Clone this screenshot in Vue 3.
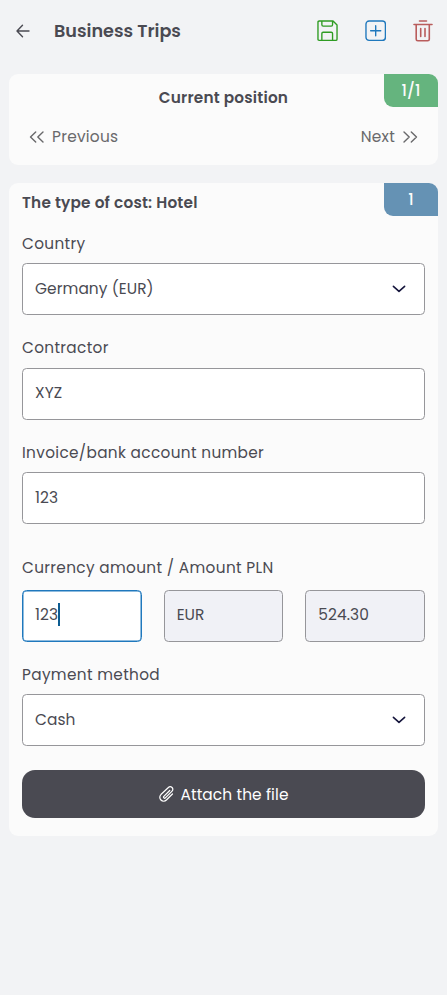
<script setup>
import { ref } from 'vue'

const country = ref('Germany (EUR)')
const contractor = ref('XYZ')
const invoice = ref('123')
const amount = ref('123')
const currency = ref('EUR')
const amountPln = ref('524.30')
const payment = ref('Cash')
</script>

<template>
  <main class="page">
    <header class="header">
      <svg class="back" viewBox="0 0 14 14"><path d="M13 7H1.2M6.5 1.2L1 7l5.5 5.8" /></svg>
      <h1 class="title">Business Trips</h1>
      <div class="actions">
        <svg class="save" viewBox="0 0 22 22"><path d="M1 2.2Q1 1 2.2 1H16.5L20.6 5.2V19.8Q20.6 21 19.4 21H2.2Q1 21 1 19.8ZM5 1V5Q5 6.3 6.3 6.3H14.7Q16 6.3 16 5V1M5 21V14Q5 12.6 6.3 12.6H14.7Q16 12.6 16 14V21" /></svg>
        <svg class="add" viewBox="0 0 22 22"><rect x="1" y="1" width="20" height="20" rx="3.2" /><path d="M11 5.8V16.2M5.8 11H16.2" /></svg>
        <svg class="trash" viewBox="0 0 20 22"><path d="M1 4.5H19M6.5 1H13.5M3.2 4.5V19.2Q3.2 20.8 4.8 20.8H14.7Q16.3 20.8 16.3 19.2V4.5M7.7 8.5V16.5M12 8.5V16.5" /></svg>
      </div>
    </header>

    <section class="card position">
      <span class="badge green">1/1</span>
      <h2 class="position-title">Current position</h2>
      <nav class="pager">
        <a class="page-link">
          <svg class="double" viewBox="0 0 16 14"><path d="M6.7 1.9L1.5 7l5.2 5.1M14 1.9L8.8 7l5.2 5.1" /></svg>
          <span>Previous</span>
        </a>
        <a class="page-link">
          <span>Next</span>
          <svg class="double" viewBox="0 0 16 14"><path d="M2 1.9L7.2 7L2 12.1M9.3 1.9L14.5 7l-5.2 5.1" /></svg>
        </a>
      </nav>
    </section>

    <section class="card cost">
      <span class="badge blue">1</span>
      <h2 class="cost-title">The type of cost: Hotel</h2>

      <div class="field">
        <div class="label">Country</div>
        <div class="control select">
          <span>{{ country }}</span>
          <svg class="chevron" viewBox="0 0 14 8"><path d="M1.4 1.3L7 6.3l5.6-5" /></svg>
        </div>
      </div>
      <div class="field">
        <div class="label">Contractor</div>
        <div class="control"><span>{{ contractor }}</span></div>
      </div>
      <div class="field">
        <div class="label">Invoice/bank account number</div>
        <div class="control"><span>{{ invoice }}</span></div>
      </div>
      <div class="field amounts">
        <div class="label">Currency amount / Amount PLN</div>
        <div class="row">
          <div class="control focused"><span>{{ amount }}</span><i class="caret"></i></div>
          <div class="control disabled"><span>{{ currency }}</span></div>
          <div class="control disabled"><span>{{ amountPln }}</span></div>
        </div>
      </div>
      <div class="field">
        <div class="label">Payment method</div>
        <div class="control select">
          <span>{{ payment }}</span>
          <svg class="chevron" viewBox="0 0 14 8"><path d="M1.4 1.3L7 6.3l5.6-5" /></svg>
        </div>
      </div>

      <button class="attach" type="button">
        <svg class="clip" viewBox="0 0 18 18"><path d="M12.4 5.3L6.2 11.5a1.1 1.1 0 0 0 1.6 1.6l7.1-7.1a2.7 2.7 0 0 0-3.9-3.9L3.1 9.6a4.1 4.1 0 0 0 5.8 5.8l6.4-6.4" /></svg>
        <span>Attach the file</span>
      </button>
    </section>
  </main>
</template>

<style>
body {
  background: #f2f3f5;
}
</style>

<style scoped>
* {
  box-sizing: border-box;
}

.page {
  min-height: 995px;
  padding: 0 9px;
  background: #f2f3f5;
  color: #4a4a52;
  font-family: Poppins, Inter, sans-serif;
  font-size: 15.4px;
  font-weight: 400;
  letter-spacing: 0.07px;
  white-space: nowrap;
}

svg {
  display: block;
  flex: none;
  fill: none;
  stroke: currentColor;
  stroke-width: 1.4;
  stroke-linecap: round;
  stroke-linejoin: round;
}

.header {
  display: flex;
  align-items: center;
  height: 62px;
  padding: 0 5px 0 7px;
}

.back {
  width: 14px;
  height: 14px;
}

.title {
  margin: 0 0 0 24px;
  font-size: 17.6px;
  font-weight: 600;
  line-height: 24px;
  letter-spacing: 0;
}

.actions {
  display: flex;
  align-items: center;
  gap: 26px;
  margin-left: auto;
}

.save,
.add {
  width: 21.4px;
  height: 21.4px;
}

.save {
  color: #2f9c23;
}

.add {
  color: #1f78bd;
}

.trash {
  width: 20px;
  height: 22px;
  margin-left: 1px;
  color: #b95c5c;
  stroke-width: 1.6;
}

.card {
  position: relative;
  border-radius: 9px;
  background: #fbfbfb;
}

.position {
  height: 91px;
  margin: 12px 0 18px;
  padding: 13px 20px 0;
}

.badge {
  position: absolute;
  top: 0;
  right: 0;
  width: 54px;
  height: 32.5px;
  border-radius: 0 9px 0 9px;
  color: #fbfbfb;
  font-weight: 500;
  line-height: 33px;
  text-align: center;
}

.green {
  background: #65b47e;
}

.blue {
  background: #6592b4;
}

.position-title {
  margin: 0;
  font-size: 15.3px;
  font-weight: 600;
  line-height: 22px;
  text-align: center;
  letter-spacing: 0.2px;
}

.pager {
  display: flex;
  justify-content: space-between;
  margin-top: 17px;
  color: #69696b;
  line-height: 22px;
  letter-spacing: 0.25px;
}

.page-link {
  display: flex;
  align-items: center;
  gap: 7px;
}

.double {
  width: 16px;
  height: 14px;
}

.cost {
  height: 653px;
  padding: 9px 13px 0;
}

.cost-title {
  margin: 0;
  font-size: 15.3px;
  font-weight: 600;
  line-height: 22px;
  letter-spacing: 0.22px;
}

.field {
  margin-top: 22px;
}

.cost-title + .field {
  margin-top: 19px;
}

.label {
  height: 30.4px;
  font-size: 15.3px;
  line-height: 22px;
  letter-spacing: 0.34px;
}

.control {
  display: flex;
  align-items: center;
  height: 52px;
  padding: 0 12px 2px;
  border: 1px solid #96969a;
  border-radius: 4.5px;
  background: #fff;
}

.select {
  justify-content: space-between;
  padding-right: 18px;
}

.chevron {
  width: 14px;
  height: 8px;
  margin-top: 2px;
  color: #15153c;
  stroke-width: 1.6;
}

.amounts {
  margin-top: 32.6px;
}

.amounts .label {
  height: 33.2px;
}

.row {
  display: grid;
  grid-template-columns: repeat(3, 1fr);
  gap: 22px;
}

.focused {
  box-shadow: inset 0 0 0 0.5px #1f78bd;
  border-color: #1f78bd;
}

.disabled {
  background: #f0f1f6;
}

.caret {
  width: 2px;
  height: 23px;
  background: #0d5c91;
}

.attach {
  display: flex;
  align-items: center;
  justify-content: center;
  gap: 5px;
  width: 100%;
  height: 48px;
  margin: 24px 0 0;
  padding: 0;
  border: 0;
  border-radius: 13px;
  background: #4a4a52;
  color: #fff;
  font: inherit;
  letter-spacing: 0.1px;
}

.clip {
  width: 17px;
  height: 18px;
  stroke-width: 1.3;
}
</style>
